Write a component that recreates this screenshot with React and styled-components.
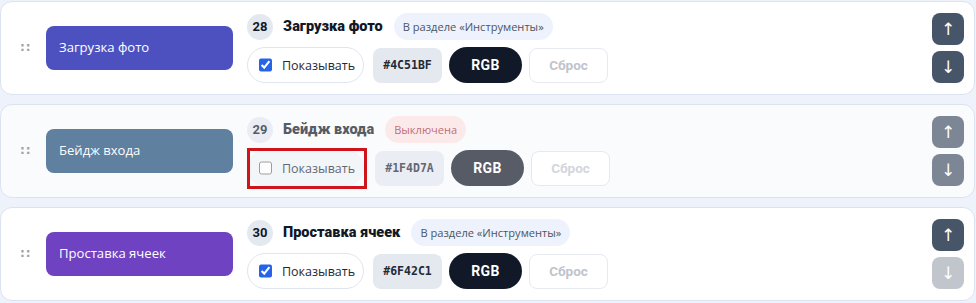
import React from "react";
import styled, { createGlobalStyle, css } from "styled-components";

const GlobalStyle = createGlobalStyle`
  html, body { margin: 0; padding: 0; }
  body {
    background: #eef2fb;
    font-family: "Open Sans", "Noto Sans", sans-serif;
    color: #111827;
  }
`;

const boldFont = css`
  font-family: Roboto, "Noto Sans", sans-serif;
`;

const List = styled.div`
  display: flex;
  flex-direction: column;
  gap: 9px;
  padding: 1px 1px 0 0;
`;

const Card = styled.div`
  box-sizing: border-box;
  height: 94px;
  display: flex;
  align-items: center;
  border: 1px solid #dbe3f0;
  border-radius: 12px;
  background: ${(p) => (p.$muted ? "#fafbfd" : "#ffffff")};
  padding: 11px 10px 11px 19px;
`;

const fade = css`
  opacity: ${(p) => (p.$muted ? 0.7 : 1)};
`;

const Handle = styled.div`
  width: 26px;
  flex: none;
  color: #9aa2ae;
  font-family: "DejaVu Sans", sans-serif;
  font-size: 12px;
  font-weight: 700;
  letter-spacing: 1px;
  line-height: 1;
  margin-top: -2px;
`;

const Label = styled.div`
  ${fade};
  box-sizing: border-box;
  flex: none;
  width: 187px;
  height: 44px;
  border-radius: 8px;
  background: ${(p) => p.$color};
  color: #fff;
  font-size: 13.1px;
  display: flex;
  align-items: center;
  padding: 0 13px 2px;
  margin-right: 14px;
`;

const Main = styled.div`
  flex: 1;
  display: flex;
  flex-direction: column;
  gap: 7px;
  align-self: flex-start;
`;

const Head = styled.div`
  display: flex;
  align-items: center;
  height: 27px;
`;

const Badge = styled.div`
  ${fade};
  ${boldFont};
  width: 26px;
  height: 26px;
  border-radius: 50%;
  background: #e4e8ef;
  color: #111827;
  font-size: 13px;
  font-weight: 700;
  display: flex;
  align-items: center;
  justify-content: center;
  margin-right: 10px;
`;

const Title = styled.div`
  ${fade};
  ${boldFont};
  font-size: 14.5px;
  font-weight: 900;
  color: #111827;
  margin-right: 11px;
`;

const Tag = styled.div`
  ${fade};
  height: 27px;
  border-radius: 14px;
  padding: 0 9px;
  display: flex;
  align-items: center;
  font-size: 11.1px;
  background: ${(p) => (p.$off ? "#fde4e4" : "#edf2fc")};
  color: ${(p) => (p.$off ? "#a8313a" : "#4b5563")};
`;

const Controls = styled.div`
  display: flex;
  align-items: center;
  gap: 7px;
`;

const Highlight = styled.div`
  position: relative;
  margin-right: 2px;
  &::after {
    content: "";
    position: absolute;
    top: -2px;
    left: 0;
    right: -3px;
    bottom: -3px;
    border: 3px solid #d0141c;
    pointer-events: none;
  }
`;

const Pill = styled.label`
  ${fade};
  box-sizing: border-box;
  height: 36px;
  width: 117px;
  border-radius: 18px;
  border: 1px solid ${(p) => (p.$muted ? "#eef1f5" : "#dfe5ee")};
  background: ${(p) => (p.$muted ? "#f1f4f8" : "#ffffff")};
  display: flex;
  align-items: center;
  gap: 10px;
  padding: 0 11px;
  font-size: 12.5px;
  color: #1f2937;
  input {
    margin: 0;
    width: 14px;
    height: 14px;
    accent-color: #2563eb;
  }
`;

const Hex = styled.div`
  ${fade};
  box-sizing: border-box;
  height: 35px;
  width: 69px;
  border-radius: 8px;
  background: #e4e8ef;
  display: flex;
  align-items: center;
  justify-content: center;
  font-family: "DejaVu Sans Mono", "Liberation Mono", monospace;
  font-weight: 700;
  font-size: 11.5px;
  color: #1f2937;
  margin-left: 2px;
`;

const Rgb = styled.button`
  ${fade};
  ${boldFont};
  box-sizing: border-box;
  height: 36px;
  width: 73px;
  border: none;
  border-radius: 18px;
  background: #111827;
  color: #fff;
  font-size: 14px;
  font-weight: 700;
  letter-spacing: 0.4px;
`;

const Reset = styled.button`
  ${boldFont};
  box-sizing: border-box;
  height: 35px;
  width: 79px;
  border: 1px solid #e6e9ef;
  border-radius: 8px;
  background: #fff;
  color: ${(p) => (p.$muted ? "#d3d6dc" : "#bfc4cc")};
  font-size: 13.5px;
  font-weight: 700;
`;

const Arrows = styled.div`
  display: flex;
  flex-direction: column;
  gap: 6px;
  align-self: flex-start;
`;

const Arrow = styled.button`
  width: 32px;
  height: 32px;
  border: none;
  border-radius: 8px;
  padding: 0;
  background: #475569;
  opacity: ${(p) => (p.$disabled ? 0.33 : p.$muted ? 0.7 : 1)};
  color: #fff;
  display: flex;
  align-items: center;
  justify-content: center;
  font-family: "DejaVu Sans", sans-serif;
  font-size: 17px;
  line-height: 1;
`;

const items = [
  {
    n: 28,
    name: "Загрузка фото",
    color: "#4C51BF",
    tag: "В разделе «Инструменты»",
    on: true,
  },
  {
    n: 29,
    name: "Бейдж входа",
    color: "#1F4D7A",
    tag: "Выключена",
    off: true,
    on: false,
  },
  {
    n: 30,
    name: "Проставка ячеек",
    color: "#6F42C1",
    tag: "В разделе «Инструменты»",
    on: true,
    last: true,
  },
];

export default function App() {
  return (
    <>
      <GlobalStyle />
      <List>
        {items.map((it) => {
          const m = !!it.off;
          const pill = (
            <Pill $muted={m}>
              <input type="checkbox" defaultChecked={it.on} />
              Показывать
            </Pill>
          );
          return (
            <Card key={it.n} $muted={m}>
              <Handle>::</Handle>
              <Label $muted={m} $color={it.color}>
                {it.name}
              </Label>
              <Main>
                <Head>
                  <Badge $muted={m}>{it.n}</Badge>
                  <Title $muted={m}>{it.name}</Title>
                  <Tag $muted={m} $off={it.off}>
                    {it.tag}
                  </Tag>
                </Head>
                <Controls>
                  {m ? <Highlight>{pill}</Highlight> : pill}
                  <Hex $muted={m}>{it.color}</Hex>
                  <Rgb $muted={m}>RGB</Rgb>
                  <Reset $muted={m}>Сброс</Reset>
                </Controls>
              </Main>
              <Arrows>
                <Arrow $muted={m}>↑</Arrow>
                <Arrow $muted={m} $disabled={it.last}>
                  ↓
                </Arrow>
              </Arrows>
            </Card>
          );
        })}
      </List>
    </>
  );
}
